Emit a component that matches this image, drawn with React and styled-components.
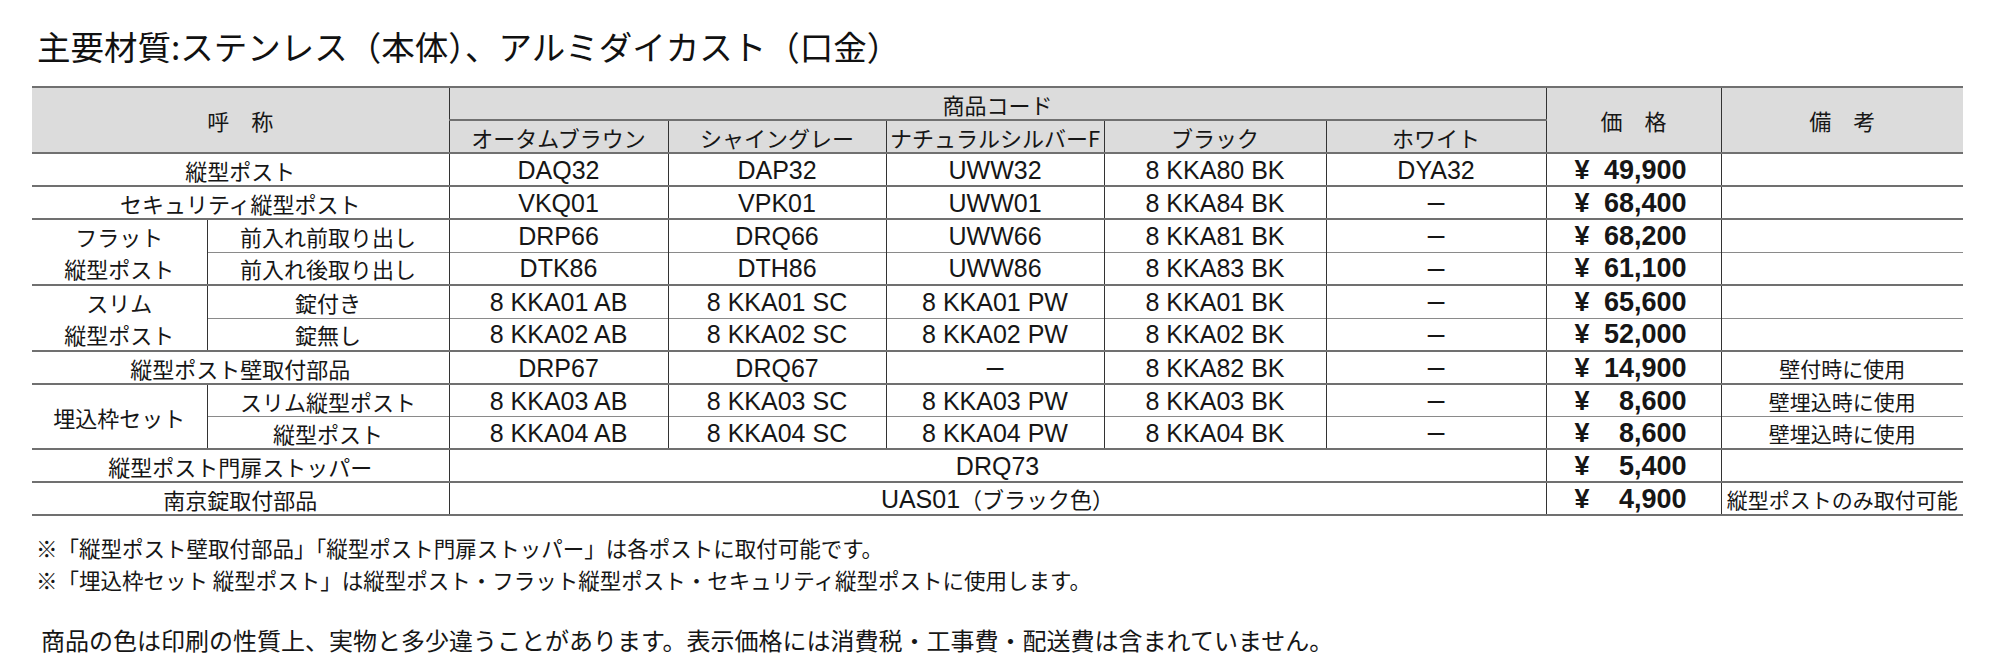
import styled, { createGlobalStyle } from "styled-components";

const GlobalStyle = createGlobalStyle`
	html, body {
		margin: 0;
		padding: 0;
		background: #ffffff;
	}
	body {
		font-family: "Noto Sans CJK JP", "Liberation Sans", sans-serif;
		color: #161616;
	}
`;

const FONTS = {
	jp: `font-family: "Noto Sans CJK JP", sans-serif; font-size: 22px;`,
	code: `font-family: "Liberation Sans", "Noto Sans CJK JP", sans-serif; font-size: 25px;`,
	price: `font-family: "Liberation Sans", sans-serif; font-size: 27px; font-weight: 700;`,
	note: `font-family: "Noto Sans CJK JP", sans-serif; font-size: 21px;`,
};

const COLS = [175, 242, 219, 218, 218, 222, 220, 175, 242];

export default function App() {
	return (
		<Page>
			<GlobalStyle />
			<Title>主要材質:ステンレス（本体）、アルミダイカスト（口金）</Title>
			<Table>
				<colgroup>
					{COLS.map((w, i) => (
						<col key={i} style={{ width: w }} />
					))}
				</colgroup>
				<thead>
					<tr>
						<Th colSpan={2} rowSpan={2}>呼　称</Th>
						<Th colSpan={5}>商品コード</Th>
						<Th rowSpan={2}>価　格</Th>
						<Th rowSpan={2}>備　考</Th>
					</tr>
					<tr>
						<Th $inner>オータムブラウン</Th>
						<Th $inner>シャイングレー</Th>
						<Th $inner>ナチュラルシルバーF</Th>
						<Th $inner>ブラック</Th>
						<Th $inner>ホワイト</Th>
					</tr>
				</thead>
				<tbody>
					<Row>
						<Td colSpan={2} $kind="jp">縦型ポスト</Td>
						<Td $kind="code">DAQ32</Td>
						<Td $kind="code">DAP32</Td>
						<Td $kind="code">UWW32</Td>
						<Td $kind="code">8 KKA80 BK</Td>
						<Td $kind="code">DYA32</Td>
						<Price value="49,900" />
						<Td $kind="note" />
					</Row>
					<Row>
						<Td colSpan={2} $kind="jp">セキュリティ縦型ポスト</Td>
						<Td $kind="code">VKQ01</Td>
						<Td $kind="code">VPK01</Td>
						<Td $kind="code">UWW01</Td>
						<Td $kind="code">8 KKA84 BK</Td>
						<Td $kind="code"><Dash>–</Dash></Td>
						<Price value="68,400" />
						<Td $kind="note" />
					</Row>
					<Row>
						<Td rowSpan={2} $kind="jp" $stack>フラット<br />縦型ポスト</Td>
						<Td $kind="jp">前入れ前取り出し</Td>
						<Td $kind="code">DRP66</Td>
						<Td $kind="code">DRQ66</Td>
						<Td $kind="code">UWW66</Td>
						<Td $kind="code">8 KKA81 BK</Td>
						<Td $kind="code"><Dash>–</Dash></Td>
						<Price value="68,200" />
						<Td $kind="note" />
					</Row>
					<Row $sub>
						<Td $kind="jp">前入れ後取り出し</Td>
						<Td $kind="code">DTK86</Td>
						<Td $kind="code">DTH86</Td>
						<Td $kind="code">UWW86</Td>
						<Td $kind="code">8 KKA83 BK</Td>
						<Td $kind="code"><Dash>–</Dash></Td>
						<Price value="61,100" />
						<Td $kind="note" />
					</Row>
					<Row>
						<Td rowSpan={2} $kind="jp" $stack>スリム<br />縦型ポスト</Td>
						<Td $kind="jp">錠付き</Td>
						<Td $kind="code">8 KKA01 AB</Td>
						<Td $kind="code">8 KKA01 SC</Td>
						<Td $kind="code">8 KKA01 PW</Td>
						<Td $kind="code">8 KKA01 BK</Td>
						<Td $kind="code"><Dash>–</Dash></Td>
						<Price value="65,600" />
						<Td $kind="note" />
					</Row>
					<Row $sub>
						<Td $kind="jp">錠無し</Td>
						<Td $kind="code">8 KKA02 AB</Td>
						<Td $kind="code">8 KKA02 SC</Td>
						<Td $kind="code">8 KKA02 PW</Td>
						<Td $kind="code">8 KKA02 BK</Td>
						<Td $kind="code"><Dash>–</Dash></Td>
						<Price value="52,000" />
						<Td $kind="note" />
					</Row>
					<Row>
						<Td colSpan={2} $kind="jp">縦型ポスト壁取付部品</Td>
						<Td $kind="code">DRP67</Td>
						<Td $kind="code">DRQ67</Td>
						<Td $kind="code"><Dash>–</Dash></Td>
						<Td $kind="code">8 KKA82 BK</Td>
						<Td $kind="code"><Dash>–</Dash></Td>
						<Price value="14,900" />
						<Td $kind="note">壁付時に使用</Td>
					</Row>
					<Row>
						<Td rowSpan={2} $kind="jp">埋込枠セット</Td>
						<Td $kind="jp">スリム縦型ポスト</Td>
						<Td $kind="code">8 KKA03 AB</Td>
						<Td $kind="code">8 KKA03 SC</Td>
						<Td $kind="code">8 KKA03 PW</Td>
						<Td $kind="code">8 KKA03 BK</Td>
						<Td $kind="code"><Dash>–</Dash></Td>
						<Price value="8,600" />
						<Td $kind="note">壁埋込時に使用</Td>
					</Row>
					<Row $sub>
						<Td $kind="jp">縦型ポスト</Td>
						<Td $kind="code">8 KKA04 AB</Td>
						<Td $kind="code">8 KKA04 SC</Td>
						<Td $kind="code">8 KKA04 PW</Td>
						<Td $kind="code">8 KKA04 BK</Td>
						<Td $kind="code"><Dash>–</Dash></Td>
						<Price value="8,600" />
						<Td $kind="note">壁埋込時に使用</Td>
					</Row>
					<Row>
						<Td colSpan={2} $kind="jp">縦型ポスト門扉ストッパー</Td>
						<Td colSpan={5} $kind="code">DRQ73</Td>
						<Price value="5,400" />
						<Td $kind="note" />
					</Row>
					<Row>
						<Td colSpan={2} $kind="jp">南京錠取付部品</Td>
						<Td colSpan={5} $kind="code">UAS01<Kana>（ブラック色）</Kana></Td>
						<Price value="4,900" />
						<Td $kind="note">縦型ポストのみ取付可能</Td>
					</Row>
				</tbody>
			</Table>
			<Notes>
				<NoteLine>※「縦型ポスト壁取付部品」「縦型ポスト門扉ストッパー」は各ポストに取付可能です。</NoteLine>
				<NoteLine>※「埋込枠セット 縦型ポスト」は縦型ポスト・フラット縦型ポスト・セキュリティ縦型ポストに使用します。</NoteLine>
			</Notes>
			<Disclaimer>商品の色は印刷の性質上、実物と多少違うことがあります。表示価格には消費税・工事費・配送費は含まれていません。</Disclaimer>
		</Page>
	);
}

function Price({ value }) {
	return (
		<Td $kind="price">
			<PriceBox>
				<span>¥</span>
				<span>{value}</span>
			</PriceBox>
		</Td>
	);
}

const Page = styled.div`
	width: 1999px;
	height: 666px;
	box-sizing: border-box;
	padding: 25px 0 0 32px;
	overflow: hidden;
`;

const Title = styled.h1`
	margin: 0 0 19px 5px;
	font-family: "Noto Sans CJK JP", sans-serif;
	font-size: 33.5px;
	font-weight: 400;
	line-height: 42px;
	color: #111;
`;

const Table = styled.table`
	width: 1931px;
	table-layout: fixed;
	border-collapse: collapse;
	border-top: 2px solid #707070;
	border-bottom: 2px solid #707070;
`;

const Th = styled.th`
	${FONTS.jp}
	font-weight: 400;
	background: #dcdcdc;
	height: 31px;
	padding: 0;
	line-height: 30px;
	text-align: center;
	white-space: nowrap;
	border-left: 1px solid #333;
	border-right: 1px solid #333;
	border-top: ${(p) => (p.$inner ? "1px solid #444" : "none")};
	border-bottom: 2px solid #707070;
	&:first-child {
		border-left: none;
	}
	&:last-child {
		border-right: none;
	}
`;

const Row = styled.tr`
	& > td {
		border-top: ${(p) => (p.$sub ? "1px solid #8a8a8a" : "2px solid #707070")};
	}
`;

const Td = styled.td`
	${(p) => FONTS[p.$kind]}
	height: 31px;
	padding: 0;
	line-height: ${(p) => (p.$stack ? "32px" : "30px")};
	text-align: center;
	white-space: nowrap;
	border-left: 1px solid #333;
	border-right: 1px solid #333;
	&:first-child {
		border-left: none;
	}
	&:last-child {
		border-right: none;
	}
`;

const PriceBox = styled.div`
	display: flex;
	justify-content: space-between;
	align-items: center;
	padding: 0 34px 0 28px;
`;

const Dash = styled.span`
	font-family: "Liberation Sans", sans-serif;
	font-size: 30px;
	line-height: 30px;
`;

const Kana = styled.span`
	font-family: "Noto Sans CJK JP", sans-serif;
	font-size: 22px;
`;

const Notes = styled.div`
	display: flex;
	flex-direction: column;
	margin: 16px 0 0 4px;
`;

const NoteLine = styled.p`
	margin: 0;
	${FONTS.note}
	font-size: 21.5px;
	line-height: 32px;
	white-space: nowrap;
`;

const Disclaimer = styled.p`
	margin: 28px 0 0 9px;
	font-family: "Noto Sans CJK JP", sans-serif;
	font-size: 24px;
	line-height: 32px;
	white-space: nowrap;
`;
